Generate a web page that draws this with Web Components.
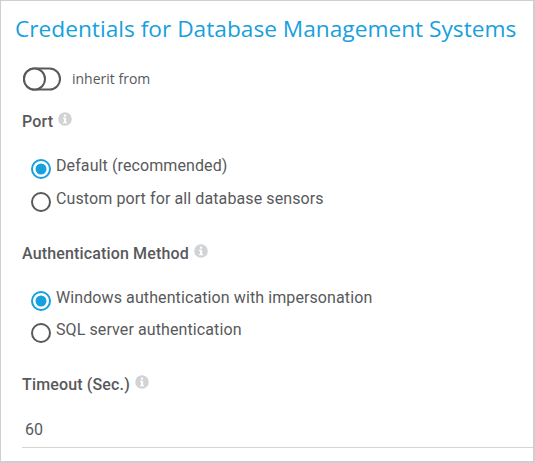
<!DOCTYPE html>
<html>
<head>
<meta charset="utf-8">
<style>
html, body { margin: 0; background: #fff; }
body { font-family: Roboto, sans-serif; color: #58595b; }
</style>
</head>
<body>
<template id="panel-tpl">
  <style>
    :host {
      display: block;
      box-sizing: border-box;
      width: 535px;
      height: 463px;
      overflow: hidden;
      background: #fff;
      border-style: solid;
      border-color: #cfcfcf;
      border-width: 1px 2px 2px 1px;
      padding: 0 0 0 21px;
    }
    h1 {
      margin: 11px 0 0 -7px;
      font: 400 22.7px/33px "Open Sans", sans-serif;
      color: #17a0dd;
      white-space: nowrap;
    }
  </style>
  <h1><slot name="title"></slot></h1>
  <slot></slot>
</template>

<template id="toggle-tpl">
  <style>
    :host { display: flex; align-items: center; gap: 11px; margin-top: 21px; height: 26px; padding-left: 1px;
      font: 400 14px/20px "Open Sans", sans-serif; color: #58595b; }
    svg { display: block; }
  </style>
  <svg width="38" height="24" viewBox="0 0 38 24">
    <rect x="1" y="1.5" width="36" height="21" rx="10.5" fill="#fff" stroke="#58595b" stroke-width="2"/>
    <circle cx="11.5" cy="12" r="10.5" fill="#fff" stroke="#58595b" stroke-width="2"/>
  </svg>
  <slot></slot>
</template>

<template id="label-tpl">
  <style>
    :host { display: flex; align-items: flex-start; gap: 5px; font: 500 16px/20px Roboto, sans-serif; color: #58595b; letter-spacing: .15px; }
    svg { display: block; margin-top: 0; }
  </style>
  <slot></slot>
  <svg width="14" height="14" viewBox="0 0 14 14">
    <circle cx="7" cy="7" r="6.8" fill="#d2d3d5"/>
    <rect x="5.9" y="2.6" width="2.2" height="2.1" fill="#fff"/>
    <path d="M5 5.8h3.1v4.1h1v1.3H5V9.9h1V7.1H5z" fill="#fff"/>
  </svg>
</template>

<template id="radio-tpl">
  <style>
    :host { display: flex; align-items: flex-start; gap: 5px; height: 33px; padding-left: 9px;
      font: 400 16px/20px Roboto, sans-serif; color: #58595b; letter-spacing: .1px; white-space: nowrap; }
    svg { display: block; margin-top: 3px; }
    .dot { display: none; }
    :host([checked]) .dot { display: block; }
    :host([checked]) .ring { stroke: #17a0dd; }
  </style>
  <svg width="20" height="20" viewBox="0 0 20 20">
    <circle class="ring" cx="10" cy="10" r="9" fill="#fff" stroke="#58595b" stroke-width="2"/>
    <circle class="dot" cx="10" cy="10" r="5.5" fill="#17a0dd"/>
  </svg>
  <span><slot></slot></span>
</template>

<template id="field-tpl">
  <style>
    :host { display: block; margin-top: 22px; }
    .value { font: 400 16px/20px Roboto, sans-serif; color: #58595b; padding: 0 0 7px 3px; margin-top: 25px; border-bottom: 1px solid #d4d4d4; }
  </style>
  <slot name="label"></slot>
  <div class="value"><slot></slot></div>
</template>

<script>
function makeEl(name, tplId) {
  customElements.define(name, class extends HTMLElement {
    constructor() {
      super();
      this.attachShadow({ mode: 'open' });
      this.shadowRoot.appendChild(document.getElementById(tplId).content.cloneNode(true));
    }
  });
}
makeEl('cred-panel', 'panel-tpl');
makeEl('cred-toggle', 'toggle-tpl');
makeEl('cred-label', 'label-tpl');
makeEl('cred-radio', 'radio-tpl');
makeEl('cred-field', 'field-tpl');
</script>

<cred-panel>
  <span slot="title">Credentials for Database Management Systems</span>
  <cred-toggle>inherit from</cred-toggle>
  <cred-label style="margin-top:20px">Port</cred-label>
  <cred-radio checked style="margin-top:24px">Default (recommended)</cred-radio>
  <cred-radio>Custom port for all database sensors</cred-radio>
  <cred-label style="margin-top:22px">Authentication Method</cred-label>
  <cred-radio checked style="margin-top:24px">Windows authentication with impersonation</cred-radio>
  <cred-radio style="margin-top:-1px">SQL server authentication</cred-radio>
  <cred-field>
    <cred-label slot="label">Timeout (Sec.)</cred-label>
    60
  </cred-field>
</cred-panel>
</body>
</html>
